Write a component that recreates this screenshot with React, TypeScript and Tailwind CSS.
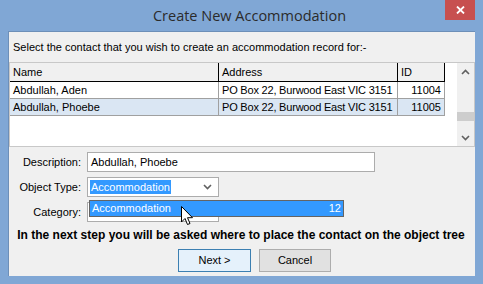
import React from 'react';

const rows = [
  { name: 'Abdullah, Aden', address: 'PO Box 22, Burwood East VIC 3151', id: '11004', selected: false },
  { name: 'Abdullah, Phoebe', address: 'PO Box 22, Burwood East VIC 3151', id: '11005', selected: true },
];

const ui = { fontFamily: '"Liberation Sans", Arial, sans-serif' };

function Chevron({ up = false }: { up?: boolean }) {
  return (
    <svg width="9" height="6" viewBox="0 0 9 6" className="block">
      <path
        d={up ? 'M1 5 L4.5 1.5 L8 5' : 'M1 1 L4.5 4.5 L8 1'}
        fill="none"
        stroke="#606060"
        strokeWidth="1.6"
      />
    </svg>
  );
}

function Cursor() {
  return (
    <svg width="13" height="20" viewBox="0 0 13 20" className="block">
      <path
        d="M0.5 0.5 L0.5 16 L4 12.5 L6.5 18.5 L9 17.5 L6.5 11.7 L11.5 11.7 Z"
        fill="#fff"
        stroke="#000"
        strokeWidth="1"
        strokeLinejoin="miter"
      />
    </svg>
  );
}

export default function App() {
  return (
    <div className="flex h-[284px] w-[483px] flex-col bg-[#80a7d5] text-[11px] text-black" style={ui}>
      {/* Title bar */}
      <div className="relative flex h-[31px] items-center justify-center pl-[16px]">
        <span
          className="text-[14.5px] text-[#2b2b2b]"
          style={{ fontFamily: '"Open Sans", "Noto Sans", sans-serif' }}
        >
          Create New Accommodation
        </span>
        <div className="absolute right-[8px] top-0 flex h-[20px] w-[30px] items-center justify-center bg-[#c75050]">
          <svg width="9" height="8" viewBox="0 0 9 8">
            <path d="M1 0.5 L8 7.5 M8 0.5 L1 7.5" stroke="#fff" strokeWidth="1.8" />
          </svg>
        </div>
      </div>

      {/* Client area */}
      <div className="relative mx-[8px] h-[245px] border-l border-t border-[#6d8fb8] bg-[#f0f0f0]">
        <div className="flex h-[30px] items-center pl-[4px] pt-[1px]">
          Select the contact that you wish to create an accommodation record for:-
        </div>

        {/* Contact list */}
        <div className="flex h-[85px] border border-[#c8c8c8] bg-white">
          <div className="flex w-[435px] flex-col">
            <div className="flex h-[19px] border-b border-black bg-[#f0f0f0]">
              <div className="flex w-[209px] items-center border-r border-black pl-[3px]">Name</div>
              <div className="flex w-[179px] items-center border-r border-black pl-[3px]">Address</div>
              <div className="flex w-[47px] items-center border-r border-black pl-[3px]">ID</div>
            </div>
            {rows.map((r) => (
              <div
                key={r.id}
                className={`flex h-[17px] border-b border-[#a0a0a0] ${r.selected ? 'bg-[#dae6f3]' : 'bg-white'}`}
              >
                <div className="flex w-[209px] items-center border-r border-[#a0a0a0] pl-[3px]">{r.name}</div>
                <div className="flex w-[179px] items-center overflow-hidden whitespace-nowrap border-r border-[#a0a0a0] pl-[3px] tracking-[-0.2px]">
                  {r.address}
                </div>
                <div className="flex w-[47px] items-center justify-end border-r border-[#a0a0a0] pr-[3px]">{r.id}</div>
              </div>
            ))}
          </div>
          <div className="flex-1" />
          <div className="flex w-[17px] flex-col items-center bg-[#f0f0f0]">
            <div className="flex h-[17px] w-full items-center justify-center">
              <Chevron up />
            </div>
            <div className="flex-1" />
            <div className="h-[9px] w-full bg-[#cdcdcd]" />
            <div className="h-[8px]" />
            <div className="flex h-[17px] w-full items-center justify-center">
              <Chevron />
            </div>
          </div>
        </div>

        {/* Form */}
        <div className="mt-[5px] flex flex-col gap-[5px]">
          <div className="flex h-[20px] items-center">
            <label className="w-[73px] pr-[1px] text-right">Description:</label>
            <div className="ml-[5px] flex h-[20px] w-[288px] items-center border border-[#acacac] bg-white pl-[3px]">
              Abdullah, Phoebe
            </div>
          </div>
          <div className="flex h-[20px] items-center">
            <label className="w-[73px] pr-[1px] text-right">Object Type:</label>
            <div className="ml-[5px] flex h-[20px] w-[132px] items-center border border-[#acacac] bg-white pl-[2px] pr-[6px]">
              <span className="bg-[#3399ff] px-[1px] leading-[14px] text-white">Accommodation</span>
              <div className="flex-1" />
              <Chevron />
            </div>
          </div>
          <div className="flex h-[20px] items-center">
            <label className="w-[73px] pr-[1px] text-right">Category:</label>
            <div className="ml-[5px] h-[20px] w-[132px] border border-[#acacac] bg-white" />
          </div>
        </div>

        <div className="mt-[6px] flex h-[14px] items-center justify-center pr-[2px] text-[12px] font-bold">
          In the next step you will be asked where to place the contact on the object tree
        </div>

        <div className="mt-[7px] flex gap-[8px] pl-[169px]">
          <button className="h-[23px] w-[73px] border border-[#3c7fb1] bg-[#e5f1fb]">Next &gt;</button>
          <button className="h-[23px] w-[72px] border border-[#adadad] bg-[#e1e1e1]">Cancel</button>
        </div>

        {/* Open drop-down list */}
        <div className="absolute left-[80px] top-[168px] flex h-[17px] w-[255px] items-center justify-between border border-[#646464] bg-[#3399ff] px-[2px] text-white">
          <span>Accommodation</span>
          <span>12</span>
        </div>

        <div className="absolute left-[172px] top-[174px]">
          <Cursor />
        </div>
      </div>
    </div>
  );
}
